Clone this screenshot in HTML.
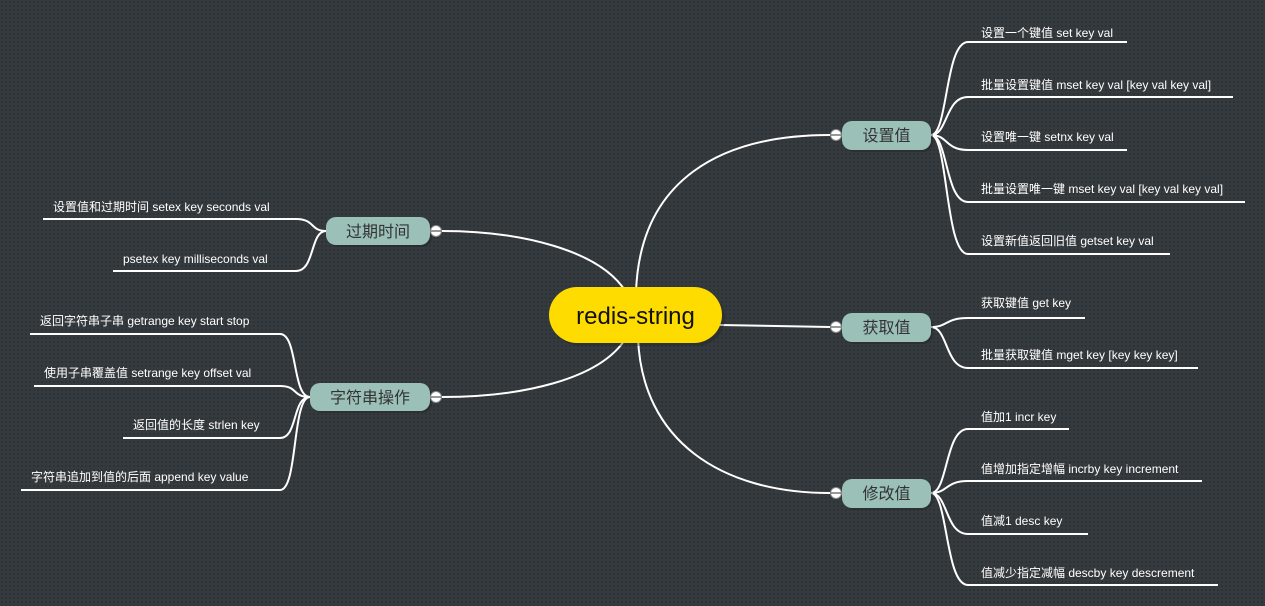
<!DOCTYPE html>
<html><head><meta charset="utf-8"><style>
html,body{margin:0;padding:0;}
body{width:1265px;height:606px;overflow:hidden;background-color:#353a3e;background-image:radial-gradient(#2c3033 0.8px,transparent 1px);background-size:4px 4px;}
svg{display:block}
.l{font-family:"Liberation Sans","Noto Sans CJK SC",sans-serif;font-size:12px;fill:#fff}
.n{font-family:"Liberation Sans","Noto Sans CJK SC",sans-serif;font-size:16px;fill:#333;text-anchor:middle}
path{fill:none;stroke:#fff;stroke-width:2}
</style></head><body>
<svg width="1265" height="606" viewBox="0 0 1265 606">
<!-- root branches -->
<path d="M636,292 C640,180 720,135 830,135" stroke-width="2.5"/>
<path d="M720,325 L830,327" stroke-width="2.5"/>
<path d="M638,338 C642,440 720,493 830,493" stroke-width="2.5"/>
<path d="M626,292 C600,250 520,231 442,231" stroke-width="2.5"/>
<path d="M626,338 C600,380 520,397 442,397" stroke-width="2.5"/>
<!-- right leaves -->
<path d="M931,135 C948,135 945,42 968,42 H1127"/>
<path d="M931,135 C948,135 945,97 968,97 H1233"/>
<path d="M931,135 C948,135 945,150 968,150 H1127"/>
<path d="M931,135 C948,135 945,202 968,202 H1245"/>
<path d="M931,135 C948,135 945,254 968,254 H1170"/>
<path d="M931,327 C948,327 945,318 968,318 H1085"/>
<path d="M931,327 C948,327 945,368 968,368 H1198"/>
<path d="M931,493 C948,493 945,429 968,429 H1069"/>
<path d="M931,493 C948,493 945,481 968,481 H1202"/>
<path d="M931,493 C948,493 945,534 968,534 H1088"/>
<path d="M931,493 C948,493 945,585 968,585 H1218"/>
<!-- left leaves -->
<path d="M326,231 C310,231 315,219 296,219 H43"/>
<path d="M326,231 C310,231 315,271 296,271 H113"/>
<path d="M310,397 C292,397 298,334 280,334 H30"/>
<path d="M310,397 C292,397 298,386 280,386 H34"/>
<path d="M310,397 C292,397 298,438 280,438 H123"/>
<path d="M310,397 C292,397 298,490 280,490 H21"/>
<!-- root -->
<rect x="552" y="290" width="173" height="56" rx="28" fill="#222" opacity=".35"/>
<rect x="549" y="287" width="173" height="56" rx="28" fill="#fedc00"/>
<text x="635.5" y="324" font-family="Liberation Sans,sans-serif" font-size="24" text-anchor="middle" fill="#111">redis-string</text>
<!-- nodes -->
<g>
<rect x="844" y="123" width="89" height="29" rx="10" fill="#222" opacity=".4"/>
<rect x="842" y="121" width="89" height="29" rx="10" fill="#9bc0b7"/>
<text class="n" x="886.5" y="141">设置值</text>
<rect x="844" y="315" width="89" height="29" rx="10" fill="#222" opacity=".4"/>
<rect x="842" y="313" width="89" height="29" rx="10" fill="#9bc0b7"/>
<text class="n" x="886.5" y="333">获取值</text>
<rect x="844" y="481" width="89" height="29" rx="10" fill="#222" opacity=".4"/>
<rect x="842" y="479" width="89" height="29" rx="10" fill="#9bc0b7"/>
<text class="n" x="886.5" y="499">修改值</text>
<rect x="328" y="219" width="104" height="28" rx="10" fill="#222" opacity=".4"/>
<rect x="326" y="217" width="104" height="28" rx="10" fill="#9bc0b7"/>
<text class="n" x="378" y="237">过期时间</text>
<rect x="312" y="385" width="120" height="28" rx="10" fill="#222" opacity=".4"/>
<rect x="310" y="383" width="120" height="28" rx="10" fill="#9bc0b7"/>
<text class="n" x="370" y="403">字符串操作</text>
</g>
<!-- collapse circles -->
<g fill="#fff" stroke="#888" stroke-width="1">
<circle cx="836" cy="135" r="5.5"/><circle cx="836" cy="327" r="5.5"/><circle cx="836" cy="493" r="5.5"/>
<circle cx="436" cy="231" r="5.5"/><circle cx="436" cy="397" r="5.5"/>
</g>
<g stroke="#555" stroke-width="1.2">
<line x1="831" y1="135" x2="841" y2="135"/><line x1="831" y1="327" x2="841" y2="327"/><line x1="831" y1="493" x2="841" y2="493"/>
<line x1="431" y1="231" x2="441" y2="231"/><line x1="431" y1="397" x2="441" y2="397"/>
</g>
<!-- labels -->
<text class="l" x="981" y="37">设置一个键值 set key val</text>
<text class="l" x="981" y="89">批量设置键值 mset key val [key val key val]</text>
<text class="l" x="981" y="141">设置唯一键 setnx key val</text>
<text class="l" x="981" y="193">批量设置唯一键 mset key val [key val key val]</text>
<text class="l" x="981" y="245">设置新值返回旧值 getset key val</text>
<text class="l" x="981" y="307">获取键值 get key</text>
<text class="l" x="981" y="359">批量获取键值 mget key [key key key]</text>
<text class="l" x="981" y="421">值加1 incr key</text>
<text class="l" x="981" y="473">值增加指定增幅 incrby key increment</text>
<text class="l" x="981" y="525">值减1 desc key</text>
<text class="l" x="981" y="577">值减少指定减幅 descby key descrement</text>
<text class="l" x="53" y="211">设置值和过期时间 setex key seconds val</text>
<text class="l" x="123" y="263">psetex key milliseconds val</text>
<text class="l" x="40" y="325">返回字符串子串 getrange key start stop</text>
<text class="l" x="44" y="377">使用子串覆盖值 setrange key offset val</text>
<text class="l" x="133" y="429">返回值的长度 strlen key</text>
<text class="l" x="31" y="481">字符串追加到值的后面 append key value</text>
</svg>
</body></html>
